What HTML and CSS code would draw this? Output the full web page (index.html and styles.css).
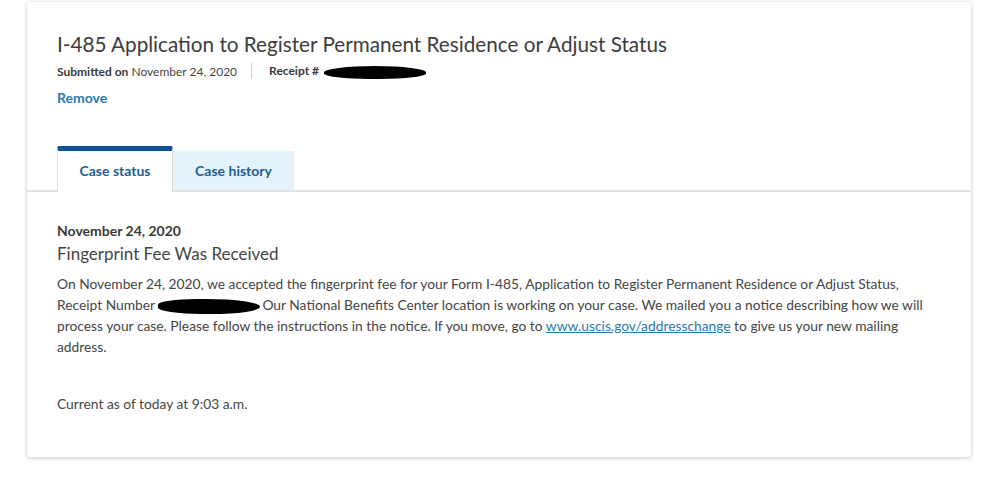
FILE: index.html
```html
<!DOCTYPE html>
<html>
<head>
<meta charset="utf-8">
<link rel="stylesheet" href="styles.css">
</head>
<body>
<div class="card">
  <div class="header">
    <h1 class="title">I-485 Application to Register Permanent Residence or Adjust Status</h1>
    <div class="meta">
      <span class="meta-item"><b>Submitted on</b> November 24, 2020</span>
      <span class="sep"></span>
      <span class="meta-item"><b>Receipt #</b> <span class="redact redact-top"></span></span>
    </div>
    <a class="remove" href="#">Remove</a>
  </div>
  <div class="tabs">
    <div class="tab active">Case status</div>
    <div class="tab inactive">Case history</div>
  </div>
  <div class="content">
    <div class="date">November 24, 2020</div>
    <h2 class="status">Fingerprint Fee Was Received</h2>
    <p class="body">On November 24, 2020, we accepted the fingerprint fee for your Form I-485, Application to Register Permanent Residence or Adjust Status, Receipt Number <span class="redact redact-body"></span>Our National Benefits Center location is working on your case. We mailed you a notice describing how we will process your case. Please follow the instructions in the notice. If you move, go to <a href="#" class="link">www.uscis.gov/addresschange</a> to give us your new mailing address.</p>
    <p class="current">Current as of today at 9:03 a.m.</p>
  </div>
</div>
</body>
</html>
```
FILE: styles.css
```css
* { box-sizing: border-box; }
html, body { margin: 0; padding: 0; background: #ffffff; }
body {
  font-family: "Lato", "Open Sans", sans-serif;
  color: #454545;
  padding: 2px 0 28px 27px;
}
.card {
  width: 944px;
  height: 455px;
  background: #fff;
  border-radius: 3px;
  box-shadow: 0 1px 4px rgba(0,0,0,0.22), 0 0 1px rgba(0,0,0,0.08);
}
.header { padding: 30px 30px 0 30px; }
.title {
  margin: 0;
  font-weight: 400;
  font-size: 20.7px;
  line-height: 24px;
  color: #3d3d3d;
}
.meta {
  display: flex;
  align-items: center;
  font-size: 12px;
  margin-top: 7px;
  color: #454545;
  height: 16px;
}
.meta b { font-weight: 700; color: #3a3a3a; }
.sep {
  width: 1px;
  height: 16px;
  background: #cfcfcf;
  margin: 0 17px 0 14px;
}
.redact {
  display: inline-block;
  background: #000;
  vertical-align: middle;
}
.redact-top {
  width: 102px;
  height: 13px;
  border-radius: 50% 50% 45% 45%;
  margin-left: 2px;
}
.remove {
  display: block;
  margin-top: 10px;
  font-size: 14px;
  font-weight: 700;
  color: #2a7aaf;
  text-decoration: none;
  line-height: 18px;
}
.tabs {
  display: flex;
  margin-top: 39px;
  padding-left: 30px;
  border-bottom: 2px solid #e2e2e2;
  height: 46px;
  align-items: flex-end;
}
.tab {
  font-size: 14px;
  font-weight: 700;
  color: #1f5f8f;
  display: flex;
  align-items: center;
  justify-content: center;
  margin-bottom: -2px;
}
.tab.active {
  width: 116px;
  height: 46px;
  border-top: 5px solid #0b5396;
  border-left: 1px solid #dcdcdc;
  border-right: 1px solid #dcdcdc;
  background: #fff;
  border-radius: 2px 2px 0 0;
  padding-bottom: 2px;
}
.tab.inactive {
  width: 121px;
  height: 39px;
  background: #e4f2fa;
  margin-bottom: 0;
}
.content { padding: 30px 30px 0 30px; }
.date {
  font-size: 14px;
  font-weight: 700;
  color: #3a3a3a;
  line-height: 18px;
}
.status {
  margin: 3px 0 0 0;
  font-weight: 400;
  font-size: 17px;
  line-height: 22px;
  color: #454545;
}
.body {
  margin: 8px 0 0 0;
  font-size: 13.8px;
  line-height: 21px;
  color: #454545;
}
.redact-body {
  width: 102px;
  height: 15px;
  border-radius: 40% 55% 50% 45%;
  margin-right: 2px;
}
.link { color: #2a7aaf; }
.current {
  margin: 36px 0 0 0;
  font-size: 13.8px;
  line-height: 21px;
}
```
